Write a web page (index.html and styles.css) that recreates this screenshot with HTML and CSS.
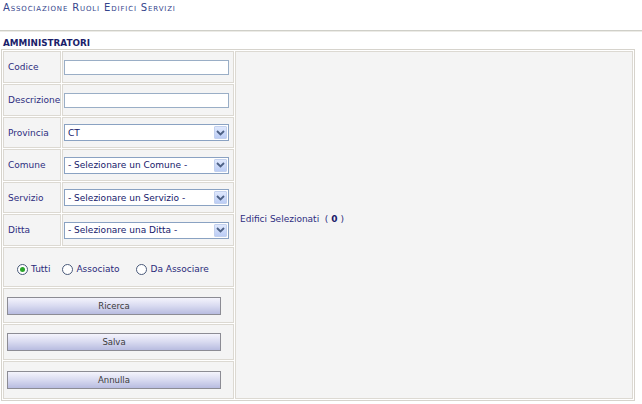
FILE: index.html
```html
<!DOCTYPE html>
<html>
<head>
<meta charset="utf-8">
<link rel="stylesheet" href="styles.css">
</head>
<body>
<div class="title">Associazione Ruoli Edifici Servizi</div>
<div class="rule"></div>
<div class="section">AMMINISTRATORI</div>
<table class="grid">
  <colgroup><col class="c1"><col class="c2"><col class="c3"></colgroup>
  <tr class="h30">
    <td class="lbl">Codice</td>
    <td class="fld"><input class="txt" type="text"></td>
    <td class="side" rowspan="10">Edifici Selezionati &nbsp;( <b>0</b> )</td>
  </tr>
  <tr class="h30">
    <td class="lbl">Descrizione</td>
    <td class="fld"><input class="txt" type="text"></td>
  </tr>
  <tr class="h29">
    <td class="lbl">Provincia</td>
    <td class="fld"><div class="sel"><span class="sel-text">CT</span><span class="sel-btn"><svg width="9" height="6" viewBox="0 0 9 6"><path d="M1 1 L4.5 4.5 L8 1" fill="none" stroke="#4d6185" stroke-width="1.8"/></svg></span></div></td>
  </tr>
  <tr class="h30">
    <td class="lbl">Comune</td>
    <td class="fld"><div class="sel"><span class="sel-text">- Selezionare un Comune -</span><span class="sel-btn"><svg width="9" height="6" viewBox="0 0 9 6"><path d="M1 1 L4.5 4.5 L8 1" fill="none" stroke="#4d6185" stroke-width="1.8"/></svg></span></div></td>
  </tr>
  <tr class="h29">
    <td class="lbl">Servizio</td>
    <td class="fld"><div class="sel"><span class="sel-text">- Selezionare un Servizio -</span><span class="sel-btn"><svg width="9" height="6" viewBox="0 0 9 6"><path d="M1 1 L4.5 4.5 L8 1" fill="none" stroke="#4d6185" stroke-width="1.8"/></svg></span></div></td>
  </tr>
  <tr class="h30">
    <td class="lbl">Ditta</td>
    <td class="fld"><div class="sel"><span class="sel-text">- Selezionare una Ditta -</span><span class="sel-btn"><svg width="9" height="6" viewBox="0 0 9 6"><path d="M1 1 L4.5 4.5 L8 1" fill="none" stroke="#4d6185" stroke-width="1.8"/></svg></span></div></td>
  </tr>
  <tr class="r-radio">
    <td class="radios" colspan="2">
      <div class="opts">
        <span class="opt opt-1"><span class="radio checked"></span>Tutti</span>
        <span class="opt opt-2"><span class="radio"></span>Associato</span>
        <span class="opt"><span class="radio"></span>Da Associare</span>
      </div>
    </td>
  </tr>
  <tr class="r-btn1"><td class="btncell" colspan="2"><span class="btn">Ricerca</span></td></tr>
  <tr class="r-btn2"><td class="btncell" colspan="2"><span class="btn">Salva</span></td></tr>
  <tr class="r-btn3"><td class="btncell" colspan="2"><span class="btn">Annulla</span></td></tr>
</table>
</body>
</html>
```

FILE: styles.css
```css
html, body {
  margin: 0;
  padding: 0;
  background: #ffffff;
}
body {
  font-family: "DejaVu Sans", Verdana, sans-serif;
  font-size: 9px;
  color: #2b2b7c;
  width: 642px;
  height: 404px;
  overflow: hidden;
}
.title {
  font-variant: small-caps;
  font-size: 10px;
  letter-spacing: 0.85px;
  color: #34458c;
  padding: 2px 0 0 3px;
  height: 28px;
  line-height: 11px;
}
.rule {
  height: 0;
  border-top: 1px solid #cfcfc8;
  border-bottom: 1px solid #ecebe6;
  margin: 0;
}
.section {
  font-weight: bold;
  font-size: 8.8px;
  color: #1b1e6a;
  padding: 7px 0 0 3px;
  height: 9px;
  line-height: 9px;
}
.grid {
  margin: 1px 0 0 1px;
  width: 634px;
  table-layout: fixed;
  border-collapse: separate;
  border-spacing: 1px;
  border: 1px solid #d6d3cc;
  background: #ffffff;
}
.c1 { width: 58px; }
.c2 { width: 172px; }
.grid td {
  background: #f4f4f4;
  border: 1px solid #dcd9d2;
  padding: 0;
  vertical-align: middle;
}
.h30 td.lbl, .h30 td.fld { height: 30px; }
.h29 td.lbl, .h29 td.fld { height: 29px; }
.lbl {
  padding-left: 4px !important;
  white-space: nowrap;
  color: #2d2d80;
}
.fld { padding-left: 1px !important; }
.txt {
  display: block;
  box-sizing: border-box;
  width: 165px;
  height: 15px;
  margin: 0;
  border: 1px solid #9aaec6;
  background: #ffffff;
  padding: 0 2px;
  font: inherit;
}
.sel {
  position: relative;
  box-sizing: border-box;
  width: 165px;
  height: 17px;
  border: 1px solid #8aa2c2;
  background: #ffffff;
  display: flex;
  align-items: center;
}
.sel-text {
  padding-left: 3px;
  color: #16186a;
  font-size: 9px;
}
.sel-btn {
  position: absolute;
  right: 1px;
  top: 1px;
  width: 13px;
  height: 13px;
  box-sizing: border-box;
  border: 1px solid #c3d1ee;
  border-radius: 1px;
  background: linear-gradient(#dfe8fd, #bccdf5);
  display: flex;
  align-items: center;
  justify-content: center;
}
.r-radio td { height: 34px; }
.radios {
  padding: 4px 0 0 13px !important;
  white-space: nowrap;
}
.opts {
  display: flex;
  align-items: center;
}
.opt {
  display: flex;
  align-items: center;
  color: #2a2a7a;
}
.opt-1 { margin-right: 12px; }
.opt-2 { margin-right: 17px; }
.radio {
  display: inline-block;
  box-sizing: border-box;
  width: 11px;
  height: 11px;
  border: 1px solid #4a5a7a;
  border-radius: 50%;
  background: #ffffff;
  margin-right: 3px;
  position: relative;
}
.radio.checked::after {
  content: "";
  position: absolute;
  left: 2px;
  top: 2px;
  width: 5px;
  height: 5px;
  border-radius: 50%;
  background: #2aa52a;
}
.r-btn1 td { height: 33px; }
.r-btn2 td { height: 34px; }
.r-btn3 td { height: 36px; }
.btncell { padding-left: 3px !important; }
.btn {
  display: flex;
  align-items: center;
  justify-content: center;
  box-sizing: border-box;
  width: 214px;
  height: 18px;
  border: 1px solid #8c8c94;
  background: linear-gradient(#f4f4fc, #d8daf0 50%, #b8bce0);
  font-family: "DejaVu Sans", Tahoma, sans-serif;
  font-size: 8.5px;
  color: #3a3a3a;
}
.side {
  padding: 0 0 12px 4px !important;
  color: #2d2d80;
  white-space: nowrap;
}
.side b { color: #1a1a6a; }
```
